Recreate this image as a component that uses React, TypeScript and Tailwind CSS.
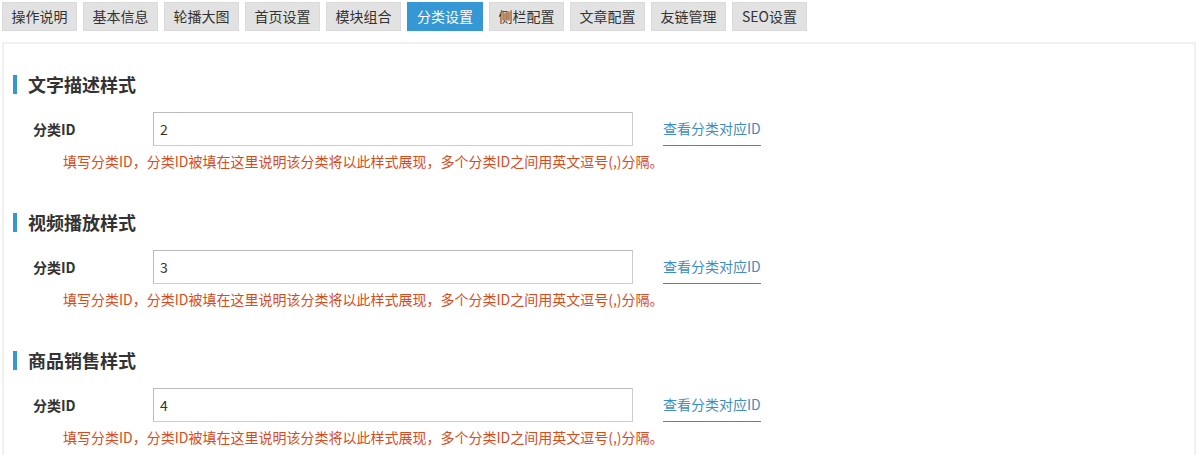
const TABS = ['操作说明', '基本信息', '轮播大图', '首页设置', '模块组合', '分类设置', '侧栏配置', '文章配置', '友链管理', 'SEO设置']

// each section binds a display style to category ids
const SECTIONS = [
  { title: '文字描述样式', value: '2' },
  { title: '视频播放样式', value: '3' },
  { title: '商品销售样式', value: '4' },
]

const HELP = '填写分类ID，分类ID被填在这里说明该分类将以此样式展现，多个分类ID之间用英文逗号(,)分隔。'

function Section({ title, value }: { title: string; value: string }) {
  return (
    <div className="mb-[41px]">
      <div className="flex items-center h-[20px]">
        <span className="w-[4px] h-[19px] bg-[#3597d3]" />
        <h3 className="ml-[11px] text-[18px] leading-[20px] font-bold text-[#333]">{title}</h3>
      </div>

      <div className="flex items-center mt-[18px] pl-[20px] h-[34px]">
        <label className="w-[120px] text-[14px] font-bold text-[#333]">分类ID</label>
        <input
          defaultValue={value}
          className="w-[480px] h-[34px] border border-[#ccc] border-t-[#bbb] border-l-[#bbb] px-[6px] text-[14px] text-[#333] outline-none"
        />
        <a className="ml-[30px] h-[34px] flex items-center border-b border-[#4f86a8] text-[14px] text-[#3d8ec0] cursor-pointer">
          查看分类对应ID
        </a>
      </div>

      <p className="mt-[5px] pl-[50px] text-[14px] leading-[20px] text-[#d94a1c]">{HELP}</p>
    </div>
  )
}

export default function App() {
  return (
    <div className="w-[1200px] h-[455px] overflow-hidden bg-white font-['Noto_Sans_CJK_SC','Microsoft_YaHei',sans-serif]">
      {/* Tabs */}
      <div className="flex gap-[6px] pl-[2px] pt-[2px]">
        {TABS.map(t => (
          <div
            key={t}
            className={
              t === '分类设置'
                ? 'h-[29px] w-[76px] flex items-center justify-center text-[14px] bg-[#3597d3] text-white'
                : 'h-[29px] w-[75px] flex items-center justify-center text-[14px] bg-[#e2e2e2] border border-[#dadada] text-[#333]'
            }
          >
            {t}
          </div>
        ))}
      </div>

      {/* Panel */}
      <div className="mx-[2px] mt-[11px] w-[1194px] border-2 border-[#f0f0f0] pl-[9px] pt-[30px] h-[420px]">
        {SECTIONS.map(s => (
          <Section key={s.title} title={s.title} value={s.value} />
        ))}
      </div>
    </div>
  )
}
